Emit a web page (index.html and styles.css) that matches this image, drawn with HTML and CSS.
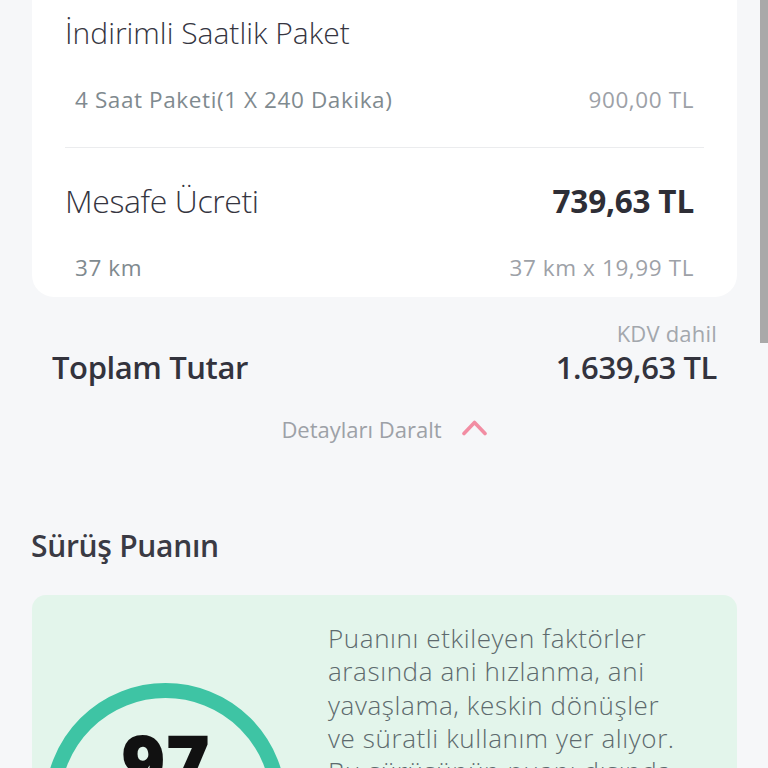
FILE: index.html
```html
<!DOCTYPE html>
<html lang="tr">
<head>
  <meta charset="UTF-8" />
  <title>Sürüş Özeti</title>
  <link rel="stylesheet" href="styles.css">
</head>
<body>

  <div class="page">
    <div class="price-card">
      <div class="card-title">İndirimli Saatlik Paket</div>
      <div class="sub-row">
        <span>4 Saat Paketi(1 X 240 Dakika)</span>
        <span class="sub-value">900,00 TL</span>
      </div>
      <div class="divider"></div>
      <div class="main-row">
        <span class="main-label">Mesafe Ücreti</span>
        <span class="main-value">739,63 TL</span>
      </div>
      <div class="sub-row sub-row-last">
        <span>37 km</span>
        <span class="sub-value">37 km x 19,99 TL</span>
      </div>
    </div>

    <div class="total-row">
      <span class="total-label">Toplam Tutar</span>
      <div class="total-right">
        <span class="vat">KDV dahil</span>
        <span class="total-value">1.639,63 TL</span>
      </div>
    </div>

    <div class="collapse">
      <span>Detayları Daralt</span>
      <svg class="chevron" width="27" height="17" viewBox="0 0 27 17">
        <path d="M3 14.5 L13.5 3.5 L24 14.5" fill="none" stroke="#f28da3" stroke-width="3.6" stroke-linecap="round" stroke-linejoin="round"/>
      </svg>
    </div>

    <h2 class="section-title">Sürüş Puanın</h2>

    <div class="score-card">
      <div class="score-ring">
        <span class="score-num">97</span>
      </div>
      <p class="score-text">Puanını etkileyen faktörler arasında ani hızlanma, ani yavaşlama, keskin dönüşler ve süratli kullanım yer alıyor. Bu sürüşünün puanı dışında</p>
    </div>
  </div>

  <div class="scrollbar"></div>

</body>
</html>
```

FILE: styles.css
```css
:root {
  --bg: #f6f7f9;
  --card-bg: #fff;
  --text: #35353f;
  --muted: #7f8a8f;
  --soft: #9da1a7;
  --green-bg: #e3f5eb;
  --ring: #3ec4a4;
}

body {
  font-family: 'Open Sans', 'Liberation Sans', sans-serif;
  background-color: var(--bg);
  color: var(--text);
  margin: 0;
  height: 768px;
  overflow: hidden;
}

.page {
  padding: 0 31px 0 32px;
}

.price-card {
  background: var(--card-bg);
  border-radius: 0 0 22px 22px;
  padding: 0 33px 11px 33px;
}

.card-title {
  font-size: 30px;
  font-weight: 300;
  line-height: 66px;
  margin-bottom: 16px;
}

.sub-row {
  display: flex;
  justify-content: space-between;
  padding: 0 10px;
  font-size: 22.5px;
  line-height: 36px;
  letter-spacing: 0.6px;
  color: var(--muted);
}

.sub-value {
  color: var(--soft);
}

.sub-row-last {
  margin-top: 27px;
}

.divider {
  height: 1px;
  background: #ebecee;
  margin-top: 29px;
}

.main-row {
  display: flex;
  justify-content: space-between;
  align-items: baseline;
  padding-right: 10px;
  margin-top: 31px;
  line-height: 44px;
}

.main-label {
  font-size: 32px;
  font-weight: 300;
  letter-spacing: -0.4px;
}

.main-value {
  font-size: 31.5px;
  font-weight: 700;
  color: #2e2e36;
  letter-spacing: -0.2px;
}

.total-row {
  display: flex;
  justify-content: space-between;
  align-items: flex-end;
  padding: 0 20px;
  margin-top: 25px;
}

.total-label,
.total-value {
  font-size: 31px;
  font-weight: 600;
  line-height: 38px;
  color: #33333d;
  letter-spacing: -0.4px;
}

.total-right {
  display: flex;
  flex-direction: column;
  align-items: flex-end;
}

.vat {
  font-size: 22px;
  line-height: 22px;
  letter-spacing: 0.2px;
  color: #a3a7ad;
  margin-bottom: 4px;
}

.collapse {
  display: flex;
  justify-content: center;
  align-items: center;
  gap: 19px;
  margin-top: 31px;
  font-size: 22px;
  line-height: 24px;
  color: var(--soft);
}

.chevron {
  margin-top: -4px;
}

.section-title {
  margin: 87px 0 0 -1px;
  font-size: 30px;
  font-weight: 600;
  line-height: 36px;
  letter-spacing: -0.3px;
  color: #3a3a44;
}

.score-card {
  display: flex;
  gap: 42px;
  margin-top: 31px;
  padding: 27px 60px 0 13px;
  background: var(--green-bg);
  border-radius: 14px;
  height: 300px;
}

.score-ring {
  flex: none;
  width: 241px;
  height: 241px;
  margin-top: 61px;
  box-sizing: border-box;
  border: 15px solid var(--ring);
  border-radius: 50%;
  display: flex;
  justify-content: center;
  padding-top: 23px;
}

.score-num {
  font-size: 76px;
  font-weight: 800;
  line-height: 80px;
  color: #111;
}

.score-text {
  margin: 0;
  font-size: 26px;
  font-weight: 300;
  line-height: 33.3px;
  letter-spacing: 0.6px;
  color: #5d6a6d;
}

.scrollbar {
  position: fixed;
  top: 0;
  right: 0;
  width: 8px;
  height: 343px;
  background: #a9a9a9;
}
```
